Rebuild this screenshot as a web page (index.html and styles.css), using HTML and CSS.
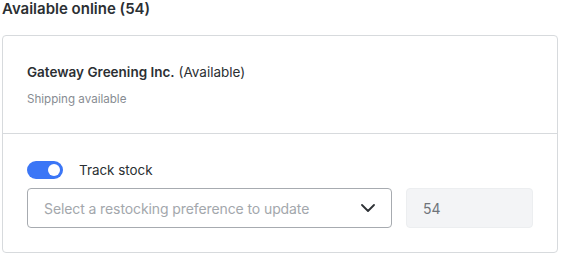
FILE: index.html
```html
<!doctype html>
<html>
<head>
  <meta charset="utf-8">
  <title>Inventory</title>
  <link rel="stylesheet" href="styles.css">
</head>
<body>
  <div id="content">
    <h2 class="title">Available online (54)</h2>
    <div class="card">
      <div class="section">
        <div class="vendor"><b>Gateway Greening Inc.</b> (Available)</div>
        <div class="note">Shipping available</div>
      </div>
      <div class="section stock">
        <label class="track">
          <span class="toggle"><span class="knob"></span></span>
          Track stock
        </label>
        <div class="fields">
          <div class="select">
            <span class="placeholder">Select a restocking preference to update</span>
            <svg width="14" height="8" viewBox="0 0 14 8"><path d="M1 1 L7 7 L13 1" fill="none" stroke="#2e3236" stroke-width="1.8" stroke-linecap="round" stroke-linejoin="round"/></svg>
          </div>
          <div class="count">54</div>
        </div>
      </div>
    </div>
  </div>
</body>
</html>
```

FILE: styles.css
```css
html {
  color: #2b2f33;
  background-color: #fff;
  font-family: Inter, "Noto Sans", sans-serif;
}

body {
  margin: 0;
}

#content {
  padding: 0 2px;
}

.title {
  margin: 0 0 17px 0;
  font-size: 15px;
  font-weight: 600;
  line-height: 18px;
}

.card {
  width: 554px;
  border: 1px solid #d7dadd;
  border-radius: 4px;
}

.section {
  padding: 26px 24px 26px 24px;
}
.section + .section {
  border-top: 1px solid #d7dadd;
}

.vendor {
  font-size: 13.5px;
  line-height: 20px;
}
.vendor b {
  font-weight: 600;
}
.note {
  margin-top: 9px;
  font-size: 11.6px;
  line-height: 16px;
  color: #878c92;
}

.stock {
  padding: 27px 23px 24px 24px;
}
.track {
  display: flex;
  align-items: center;
  gap: 16px;
  height: 18px;
  font-size: 13.4px;
}
.toggle {
  position: relative;
  width: 36px;
  height: 18px;
  border-radius: 9px;
  background-color: #3b76f6;
}
.knob {
  position: absolute;
  top: 3px;
  right: 3px;
  width: 12px;
  height: 12px;
  border-radius: 50%;
  background-color: #fff;
}

.fields {
  display: grid;
  grid-template-columns: 365px 127px;
  gap: 14px;
  margin-top: 9px;
}
.select, .count {
  box-sizing: border-box;
  height: 40px;
  display: flex;
  align-items: center;
  padding: 0 16px;
  border-radius: 4px;
  font-size: 14px;
}
.select {
  justify-content: space-between;
  border: 1px solid #a7abb0;
}
.placeholder {
  color: #a3a7ac;
  letter-spacing: -0.1px;
}
.count {
  border: 1px solid #eceef0;
  background-color: #f3f4f6;
  color: #6f747a;
}
```
